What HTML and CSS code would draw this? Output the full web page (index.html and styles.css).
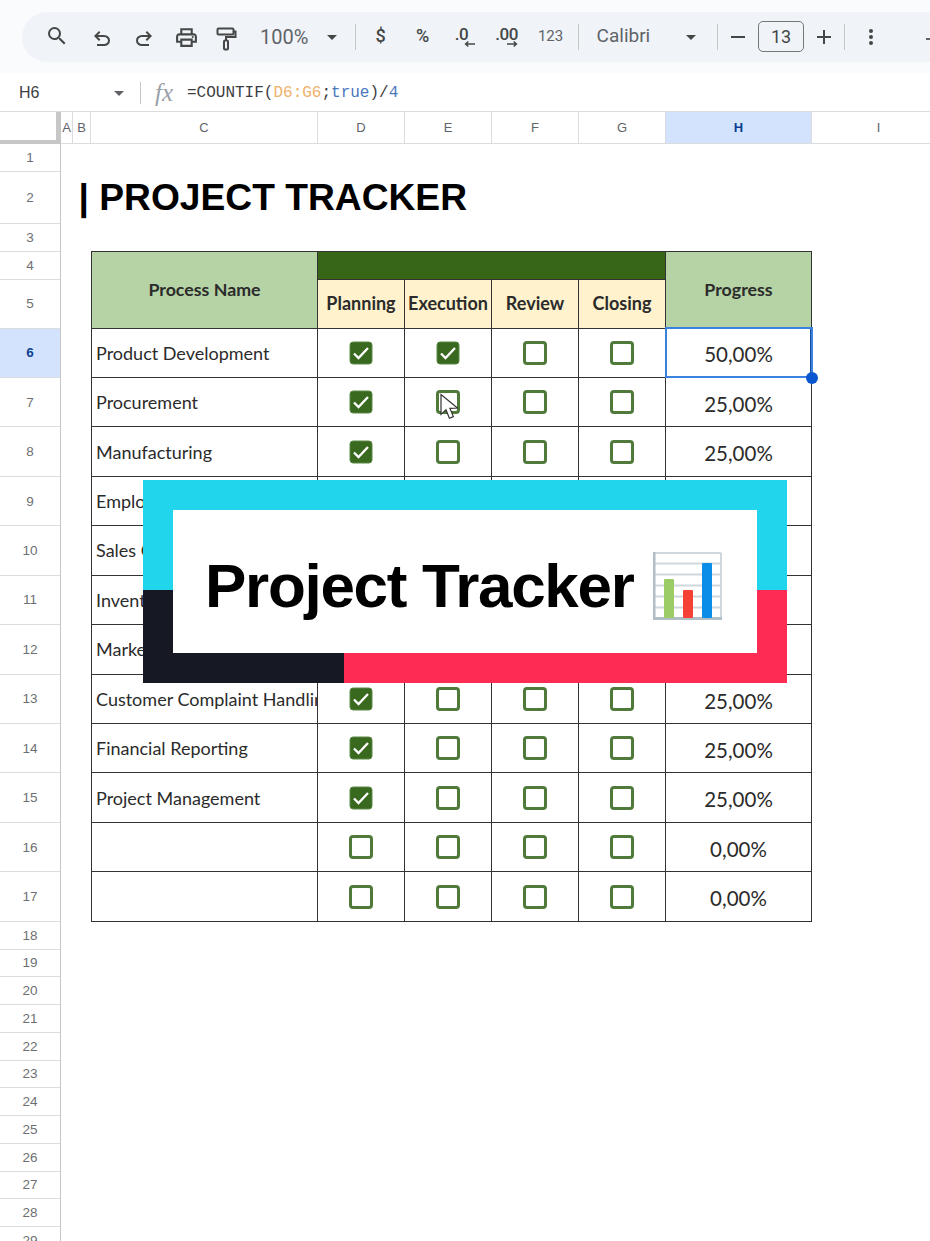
FILE: index.html
```html
<!DOCTYPE html>
<html>
<head>
    <meta charset="UTF-8">
    <title>Project Tracker</title>
    <link rel="stylesheet" href="styles.css">
</head>
<body>
    <svg class="defs" width="0" height="0">
        <symbol id="box-on" viewBox="0 0 24 24">
            <rect x="1" y="1" width="22" height="22" rx="3" fill="#38691f" stroke="#5d8a48" stroke-width="1"/>
            <path d="M5 12.500l4.500 4.500 9.500-10" fill="none" stroke="#fff" stroke-width="2.300"/>
        </symbol>
        <symbol id="box-off" viewBox="0 0 24 24">
            <rect x="1.500" y="1.500" width="21" height="21" rx="2.500" fill="#fff" stroke="#4f7a3a" stroke-width="3"/>
        </symbol>
    </svg>

    <div class="topbar">
        <div class="toolbar">
            <button class="tool tool-first"><svg class="icon" viewBox="0 0 24 24"><path d="M15.5 14h-.79l-.28-.27A6.471 6.471 0 0 0 16 9.5 6.5 6.5 0 1 0 9.5 16c1.61 0 3.09-.59 4.23-1.57l.27.28v.79l5 4.99L20.49 19l-4.99-5zm-6 0C7.01 14 5 11.99 5 9.5S7.01 5 9.5 5 14 7.01 14 9.5 11.99 14 9.5 14z"/></svg></button>
            <button class="tool tool-low"><svg class="icon" viewBox="0 0 24 24"><path d="M7 19v-2h7.1q1.575 0 2.737-1T18 13.5q0-1.5-1.163-2.5T14.1 10H7.8l2.6 2.6L9 14 4 9l5-5 1.4 1.4L7.8 8h6.3q2.425 0 4.163 1.575T20 13.5q0 2.35-1.737 3.925T14.1 19H7z"/></svg></button>
            <button class="tool tool-low"><svg class="icon flip" viewBox="0 0 24 24"><path d="M7 19v-2h7.1q1.575 0 2.737-1T18 13.5q0-1.5-1.163-2.5T14.1 10H7.8l2.6 2.6L9 14 4 9l5-5 1.4 1.4L7.8 8h6.3q2.425 0 4.163 1.575T20 13.5q0 2.35-1.737 3.925T14.1 19H7z"/></svg></button>
            <button class="tool"><svg class="icon icon-lg" viewBox="0 0 24 24"><path d="M19 8h-1V3H6v5H5c-1.66 0-3 1.34-3 3v6h4v4h12v-4h4v-6c0-1.66-1.34-3-3-3zM8 5h8v3H8V5zm8 12v2H8v-4h8v2zm2-2v-2H6v2H4v-4c0-.55.45-1 1-1h14c.55 0 1 .45 1 1v4h-2z"/><circle cx="18" cy="11.5" r="1"/></svg></button>
            <button class="tool tool-paint"><svg class="icon stroke" viewBox="0 0 24 24"><rect x="2.500" y="1.500" width="16" height="6" rx="1"/><path d="M18.500 4.500h2v5.500H11v3.500"/><rect x="9" y="13.500" width="4" height="9" rx="1"/></svg></button>
            <div class="zoom-val">100%</div>
            <span class="caret zoom-caret"></span>
            <span class="divider div-zoom"></span>
            <button class="tool tool-text tool-dollar">$</button>
            <button class="tool tool-text">%</button>
            <button class="tool tool-dec">.0<svg class="mini-arrow" viewBox="0 0 14 8"><path d="M14 4H2M5.5 .8L2 4l3.5 3.2"/></svg></button>
            <button class="tool tool-dec tool-dec2">.00<svg class="mini-arrow" viewBox="0 0 14 8"><path d="M0 4h12M8.5 .8L12 4 8.5 7.2"/></svg></button>
            <button class="tool tool-123">123</button>
            <span class="divider div-num"></span>
            <div class="font-name">Calibri</div>
            <span class="caret font-caret"></span>
            <span class="divider div-font"></span>
            <button class="tool tool-sign"><svg class="icon" viewBox="0 0 24 24"><path d="M5 11h14v2H5z"/></svg></button>
            <div class="size-box">13</div>
            <button class="tool tool-sign"><svg class="icon" viewBox="0 0 24 24"><path d="M19 13h-6v6h-2v-6H5v-2h6V5h2v6h6v2z"/></svg></button>
            <span class="divider"></span>
            <button class="tool tool-more"><svg class="icon" viewBox="0 0 24 24"><circle cx="12" cy="6" r="2"/><circle cx="12" cy="12" r="2"/><circle cx="12" cy="18" r="2"/></svg></button>
            <span class="tool-edge"></span>
        </div>
    </div>

    <div class="formula-bar">
        <div class="name-box">H6</div>
        <span class="caret name-caret"></span>
        <span class="divider formula-div"></span>
        <div class="fx">fx</div>
        <div class="formula">=COUNTIF(<span class="ref">D6:G6</span>;<span class="lit">true</span>)/<span class="lit">4</span></div>
    </div>

    <div class="col-heads">
        <div class="corner"></div>
        <div class="col-head col-a">A</div>
        <div class="col-head col-b">B</div>
        <div class="col-head col-c">C</div>
        <div class="col-head col-d">D</div>
        <div class="col-head col-d">E</div>
        <div class="col-head col-d">F</div>
        <div class="col-head col-d">G</div>
        <div class="col-head col-h active">H</div>
        <div class="col-head col-i">I</div>
    </div>

    <div class="sheet">
        <div class="row-heads">
            <div class="row-head row-sm">1</div>
            <div class="row-head row-title">2</div>
            <div class="row-head row-sm">3</div>
            <div class="row-head row-sm">4</div>
            <div class="row-head row-md">5</div>
            <div class="row-head row-lg active">6</div>
            <div class="row-head row-lg">7</div>
            <div class="row-head row-lg">8</div>
            <div class="row-head row-lg">9</div>
            <div class="row-head row-lg">10</div>
            <div class="row-head row-lg">11</div>
            <div class="row-head row-lg">12</div>
            <div class="row-head row-lg">13</div>
            <div class="row-head row-lg">14</div>
            <div class="row-head row-lg">15</div>
            <div class="row-head row-lg">16</div>
            <div class="row-head row-lg">17</div>
            <div class="row-head row-xs">18</div>
            <div class="row-head row-xs">19</div>
            <div class="row-head row-xs">20</div>
            <div class="row-head row-xs">21</div>
            <div class="row-head row-xs">22</div>
            <div class="row-head row-xs">23</div>
            <div class="row-head row-xs">24</div>
            <div class="row-head row-xs">25</div>
            <div class="row-head row-xs">26</div>
            <div class="row-head row-xs">27</div>
            <div class="row-head row-xs">28</div>
            <div class="row-head row-xs">29</div>
        </div>

        <div class="canvas">
            <div class="title">| PROJECT TRACKER</div>
            <table class="tracker">
                <colgroup>
                    <col class="c-name"><col class="c-step"><col class="c-step"><col class="c-step"><col class="c-step"><col class="c-prog">
                </colgroup>
                <tr class="tr-band">
                    <th class="green" rowspan="2">Process Name</th>
                    <th class="band" colspan="4"></th>
                    <th class="green" rowspan="2">Progress</th>
                </tr>
                <tr class="tr-steps">
                    <th class="cream">Planning</th>
                    <th class="cream">Execution</th>
                    <th class="cream">Review</th>
                    <th class="cream">Closing</th>
                </tr>
                <tr>
                    <td class="name">Product Development</td>
                    <td class="chk"><svg class="box"><use href="#box-on"/></svg></td>
                    <td class="chk"><svg class="box"><use href="#box-on"/></svg></td>
                    <td class="chk"><svg class="box"><use href="#box-off"/></svg></td>
                    <td class="chk"><svg class="box"><use href="#box-off"/></svg></td>
                    <td class="pct selected">50,00%<span class="handle"></span></td>
                </tr>
                <tr>
                    <td class="name">Procurement</td>
                    <td class="chk"><svg class="box"><use href="#box-on"/></svg></td>
                    <td class="chk has-cursor"><svg class="box"><use href="#box-off"/></svg>
                        <svg class="cursor" viewBox="0 0 19 27"><path d="M1 1v20l5-4.6 3.4 8.4 4-1.7-3.5-8.2 7.6-.4z"/></svg>
                    </td>
                    <td class="chk"><svg class="box"><use href="#box-off"/></svg></td>
                    <td class="chk"><svg class="box"><use href="#box-off"/></svg></td>
                    <td class="pct">25,00%</td>
                </tr>
                <tr>
                    <td class="name">Manufacturing</td>
                    <td class="chk"><svg class="box"><use href="#box-on"/></svg></td>
                    <td class="chk"><svg class="box"><use href="#box-off"/></svg></td>
                    <td class="chk"><svg class="box"><use href="#box-off"/></svg></td>
                    <td class="chk"><svg class="box"><use href="#box-off"/></svg></td>
                    <td class="pct">25,00%</td>
                </tr>
                <tr>
                    <td class="name">Employee Training</td>
                    <td class="chk"><svg class="box"><use href="#box-on"/></svg></td>
                    <td class="chk"><svg class="box"><use href="#box-off"/></svg></td>
                    <td class="chk"><svg class="box"><use href="#box-off"/></svg></td>
                    <td class="chk"><svg class="box"><use href="#box-off"/></svg></td>
                    <td class="pct">25,00%</td>
                </tr>
                <tr>
                    <td class="name">Sales Order Processing</td>
                    <td class="chk"><svg class="box"><use href="#box-on"/></svg></td>
                    <td class="chk"><svg class="box"><use href="#box-off"/></svg></td>
                    <td class="chk"><svg class="box"><use href="#box-off"/></svg></td>
                    <td class="chk"><svg class="box"><use href="#box-off"/></svg></td>
                    <td class="pct">25,00%</td>
                </tr>
                <tr>
                    <td class="name">Inventory Management</td>
                    <td class="chk"><svg class="box"><use href="#box-on"/></svg></td>
                    <td class="chk"><svg class="box"><use href="#box-off"/></svg></td>
                    <td class="chk"><svg class="box"><use href="#box-off"/></svg></td>
                    <td class="chk"><svg class="box"><use href="#box-off"/></svg></td>
                    <td class="pct">25,00%</td>
                </tr>
                <tr>
                    <td class="name">Marketing Campaign</td>
                    <td class="chk"><svg class="box"><use href="#box-on"/></svg></td>
                    <td class="chk"><svg class="box"><use href="#box-off"/></svg></td>
                    <td class="chk"><svg class="box"><use href="#box-off"/></svg></td>
                    <td class="chk"><svg class="box"><use href="#box-off"/></svg></td>
                    <td class="pct">25,00%</td>
                </tr>
                <tr>
                    <td class="name">Customer Complaint Handling</td>
                    <td class="chk"><svg class="box"><use href="#box-on"/></svg></td>
                    <td class="chk"><svg class="box"><use href="#box-off"/></svg></td>
                    <td class="chk"><svg class="box"><use href="#box-off"/></svg></td>
                    <td class="chk"><svg class="box"><use href="#box-off"/></svg></td>
                    <td class="pct">25,00%</td>
                </tr>
                <tr>
                    <td class="name">Financial Reporting</td>
                    <td class="chk"><svg class="box"><use href="#box-on"/></svg></td>
                    <td class="chk"><svg class="box"><use href="#box-off"/></svg></td>
                    <td class="chk"><svg class="box"><use href="#box-off"/></svg></td>
                    <td class="chk"><svg class="box"><use href="#box-off"/></svg></td>
                    <td class="pct">25,00%</td>
                </tr>
                <tr>
                    <td class="name">Project Management</td>
                    <td class="chk"><svg class="box"><use href="#box-on"/></svg></td>
                    <td class="chk"><svg class="box"><use href="#box-off"/></svg></td>
                    <td class="chk"><svg class="box"><use href="#box-off"/></svg></td>
                    <td class="chk"><svg class="box"><use href="#box-off"/></svg></td>
                    <td class="pct">25,00%</td>
                </tr>
                <tr>
                    <td class="name"></td>
                    <td class="chk"><svg class="box"><use href="#box-off"/></svg></td>
                    <td class="chk"><svg class="box"><use href="#box-off"/></svg></td>
                    <td class="chk"><svg class="box"><use href="#box-off"/></svg></td>
                    <td class="chk"><svg class="box"><use href="#box-off"/></svg></td>
                    <td class="pct">0,00%</td>
                </tr>
                <tr>
                    <td class="name"></td>
                    <td class="chk"><svg class="box"><use href="#box-off"/></svg></td>
                    <td class="chk"><svg class="box"><use href="#box-off"/></svg></td>
                    <td class="chk"><svg class="box"><use href="#box-off"/></svg></td>
                    <td class="chk"><svg class="box"><use href="#box-off"/></svg></td>
                    <td class="pct">0,00%</td>
                </tr>
            </table>
        </div>
    </div>

    <div class="banner">
        <div class="banner-inner">
            <span class="banner-text">Project Tracker</span>
            <svg class="chart" viewBox="0 0 69 68">
                <rect width="69" height="68" fill="#fff"/>
                <path d="M2 11.500h66M2 22.500h66M2 33.500h66M2 44.500h66M2 55.500h66M2 1h66M68 1v66" fill="none" stroke="#cfd8dc" stroke-width="2"/>
                <path d="M1 0v68M0 66.500h69" fill="none" stroke="#b0bec5" stroke-width="3"/>
                <rect x="11" y="27" width="10" height="39" rx="1" fill="#9ccc65"/>
                <rect x="30" y="38" width="10" height="28" rx="1" fill="#f44336"/>
                <rect x="49" y="11" width="10" height="55" rx="1" fill="#0a8ce9"/>
            </svg>
        </div>
    </div>
</body>
</html>
```

FILE: styles.css
```css
body {
    margin: 0;
    width: 930px;
    height: 1241px;
    overflow: hidden;
    position: relative;
    background-color: #fff;
    font-family: "Liberation Sans", sans-serif;
    color: #444746;
}
.defs {
    position: absolute;
}

/* toolbar */
.topbar {
    height: 73px;
    box-sizing: border-box;
    padding: 12px 0 0 22px;
    background-color: #f9fbfd;
}
.toolbar {
    display: flex;
    align-items: center;
    height: 50px;
    padding-left: 14px;
    border-radius: 25px 0 0 25px;
    background-color: #f0f4f9;
}
.tool {
    display: flex;
    justify-content: center;
    align-items: center;
    flex: none;
    width: 42px;
    height: 36px;
    padding: 0;
    border: 0;
    background: none;
    color: #444746;
    font-family: "Roboto", sans-serif;
}
.tool-low {
    padding-top: 4px;
}
.tool-first {
    margin-right: 3px;
    padding-bottom: 2px;
}
.tool-paint {
    width: 40px;
    padding-top: 3px;
}
.icon {
    width: 24px;
    height: 24px;
    fill: #444746;
}
.icon-lg {
    width: 25px;
    height: 25px;
}
.stroke {
    fill: none;
    stroke: #444746;
    stroke-width: 2;
}
.flip {
    transform: scaleX(-1);
}
.zoom-val {
    width: 70px;
    margin-left: 13px;
    font-family: "Roboto", sans-serif;
    font-size: 20px;
    color: #5f6368;
}
.caret {
    flex: none;
    width: 0;
    height: 0;
    border-left: 5.5px solid transparent;
    border-right: 5.5px solid transparent;
    border-top: 5.5px solid #444746;
}
.zoom-caret {
    margin-left: -3px;
}
.divider {
    flex: none;
    width: 1px;
    height: 26px;
    background-color: #c7c7c7;
}
.div-zoom {
    margin-left: 18px;
}
.div-num {
    margin-left: 5px;
}
.div-font {
    margin-left: 21px;
}
.tool-text {
    padding-bottom: 3px;
    font-size: 18px;
    font-weight: 500;
}
.tool-dollar {
    margin-left: 4px;
}
.tool-dec {
    position: relative;
    width: 36px;
    padding-bottom: 6px;
    font-size: 17px;
    font-weight: 500;
    letter-spacing: -0.5px;
}
.tool-dec2 {
    margin-left: 9px;
}
.mini-arrow {
    position: absolute;
    right: 5px;
    bottom: 7px;
    width: 11px;
    height: 8px;
    fill: none;
    stroke: #444746;
    stroke-width: 1.9;
}
.tool-dec2 .mini-arrow {
    right: 7px;
}
.tool-123 {
    width: 44px;
    margin-left: 4px;
    padding-bottom: 3px;
    font-size: 15px;
    font-weight: 400;
    color: #5f6368;
}
.font-name {
    width: 92px;
    margin-left: 18px;
    padding-bottom: 3px;
    font-family: "Roboto", sans-serif;
    font-size: 19px;
    color: #5f6368;
}
.font-caret {
    margin-left: -2px;
}
.tool-sign {
    width: 40px;
}
.size-box {
    flex: none;
    width: 44px;
    height: 29px;
    margin-bottom: 1px;
    border: 1px solid #747775;
    border-radius: 5px;
    text-align: center;
    line-height: 30px;
    font-family: "Roboto", sans-serif;
    font-size: 18px;
    color: #444746;
}
.tool-more {
    margin-left: 5px;
}
.tool-edge {
    flex: none;
    width: 4px;
    height: 2px;
    margin: 3px 0 0 34px;
    background-color: #5f6368;
}

/* formula bar */
.formula-bar {
    display: flex;
    align-items: center;
    height: 39px;
    box-sizing: border-box;
    padding-top: 2px;
    border-bottom: 1px solid #dadce0;
}
.name-box {
    width: 95px;
    padding-left: 19px;
    font-size: 16px;
    color: #3c4043;
}
.name-caret {
    border-top-color: #5f6368;
}
.formula-div {
    margin-left: 16px;
    height: 22px;
}
.fx {
    width: 32px;
    margin-left: 14px;
    font-family: "Liberation Serif", serif;
    font-style: italic;
    font-size: 25px;
    color: #9aa0a6;
}
.formula {
    font-family: "Liberation Mono", monospace;
    font-size: 16px;
    color: #3c4043;
}
.ref {
    color: #eeb26b;
}
.lit {
    color: #4a78bd;
}

/* column and row headers */
.col-heads {
    display: flex;
    height: 31.5px;
    box-sizing: border-box;
    border-bottom: 1px solid #dadce0;
}
.corner {
    flex: none;
    width: 61px;
    box-sizing: border-box;
    border-right: 5px solid #c7c7c7;
    border-bottom: 4px solid #c7c7c7;
    margin-bottom: -1px;
}
.col-head {
    display: flex;
    justify-content: center;
    align-items: center;
    flex: none;
    box-sizing: border-box;
    border-right: 1px solid #dadce0;
    font-size: 13px;
    color: #5f6368;
}
.col-a { width: 12px; }
.col-b { width: 18px; }
.col-c { width: 227px; }
.col-d { width: 87px; }
.col-h { width: 146px; }
.col-i { width: 134px; }
.col-head.active {
    background-color: #d3e3fd;
    color: #0b3f8f;
    font-weight: bold;
}
.sheet {
    display: flex;
}
.row-heads {
    flex: none;
    width: 61px;
    box-sizing: border-box;
    border-right: 1px solid #c7c7c7;
}
.row-head {
    display: flex;
    justify-content: center;
    align-items: center;
    box-sizing: border-box;
    border-bottom: 1px solid #dadce0;
    font-size: 13.5px;
    color: #6d6f72;
}
.row-sm { height: 28px; }
.row-title { height: 52px; }
.row-md { height: 49px; }
.row-lg { height: 49.45px; }
.row-xs { height: 27.75px; }
.row-head.active {
    background-color: #d3e3fd;
    color: #0b3f8f;
    font-weight: bold;
}

/* sheet content */
.canvas {
    flex: 1;
    min-width: 0;
}
.title {
    height: 52px;
    margin: 27.5px 0 27.5px 17.5px;
    line-height: 52px;
    font-size: 37.2px;
    font-weight: bold;
    color: #000;
    white-space: nowrap;
}
.tracker {
    margin-left: 30px;
    border-collapse: collapse;
    table-layout: fixed;
    width: 720px;
    font-family: "Lato", sans-serif;
    color: #2b2b2b;
}
.c-name { width: 226px; }
.c-step { width: 87px; }
.c-prog { width: 146px; }
.tracker th, .tracker td {
    padding: 0;
    border: 1px solid #333;
    overflow: hidden;
    white-space: nowrap;
}
.tracker tr {
    height: 49.45px;
}
.tracker .tr-band {
    height: 28px;
}
.tracker .tr-steps {
    height: 49px;
}
.green {
    background-color: #b6d3a6;
    font-size: 17.8px;
    font-weight: 700;
    padding-bottom: 2px !important;
}
.band {
    background-color: #376617;
}
.cream {
    background-color: #fff2cc;
    font-size: 18px;
    font-weight: 700;
    padding-bottom: 2px !important;
}
.name {
    padding-left: 4px !important;
    font-size: 18px;
}
.chk {
    text-align: center;
}
.box {
    display: block;
    width: 24px;
    height: 24px;
    margin: 0 auto;
}
.pct {
    padding-top: 3.5px !important;
    text-align: center;
    font-size: 20.5px;
}
.tracker .selected {
    position: relative;
    overflow: visible;
    outline: 2px solid #3b82e0;
    outline-offset: -1px;
    box-shadow: inset -1px 0 0 #1a4fa0;
}
.handle {
    position: absolute;
    right: -7px;
    bottom: -7px;
    width: 12px;
    height: 12px;
    border-radius: 50%;
    background-color: #0b57d0;
}
.tracker .has-cursor {
    position: relative;
    overflow: visible;
}
.cursor {
    position: absolute;
    left: 35px;
    top: 15px;
    width: 19px;
    height: 28px;
    fill: #fff;
    stroke: #333;
    stroke-width: 1.2;
}

/* overlay caption */
.banner {
    position: absolute;
    left: 143px;
    top: 480px;
    width: 644px;
    height: 203px;
    box-sizing: border-box;
    padding: 30px;
    background:
        linear-gradient(#20d5ec 110px, transparent 110px),
        linear-gradient(to right, #161823 201px, #fe2c55 201px);
}
.banner-inner {
    display: flex;
    align-items: center;
    gap: 19px;
    height: 100%;
    box-sizing: border-box;
    padding: 7px 0 0 32px;
    background-color: #fff;
}
.banner-text {
    font-size: 62px;
    font-weight: bold;
    letter-spacing: -1.3px;
    color: #000;
    white-space: nowrap;
}
.chart {
    flex: none;
    width: 69px;
    height: 68px;
    margin-top: 2px;
}
```
